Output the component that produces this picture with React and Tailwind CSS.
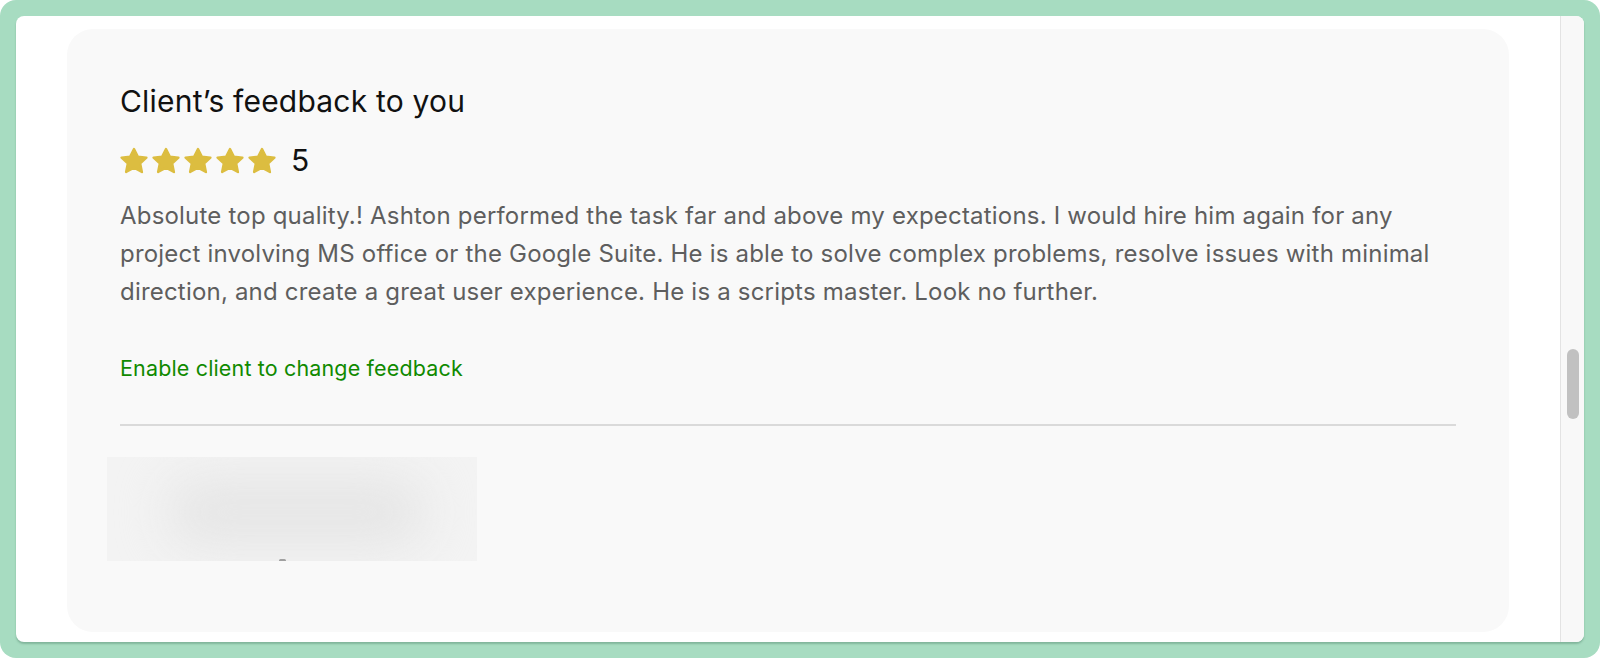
import React from 'react'

const Star = () => (
  <svg width="28" height="27" viewBox="0 0 28 27" className="shrink-0">
    <polygon
      points="14,2 17.8,9.6 26.4,10.6 20.2,16.5 21.9,25 14,20.8 6.1,25 7.8,16.5 1.6,10.6 10.2,9.6"
      fill="#dcbd40"
      stroke="#dcbd40"
      strokeWidth="2.4"
      strokeLinejoin="round"
    />
  </svg>
)

const FeedbackCard = () => {
  const text =
    'Absolute top quality.! Ashton performed the task far and above my expectations. I would hire him again for any project involving MS office or the Google Suite. He is able to solve complex problems, resolve issues with minimal direction, and create a great user experience. He is a scripts master. Look no further.'

  return (
    <div className="mx-[51px] mt-[13px] h-[603px] rounded-[26px] bg-[#f9f9f9] px-[53px] pt-[54px]">
      <h2 className="text-[30px] leading-[36px] tracking-[0.2px] text-[#111111]">Client’s feedback to you</h2>

      <div className="mt-[27px] flex h-[28px] items-center">
        <div className="flex gap-[4px]">
          {[0, 1, 2, 3, 4].map((i) => (
            <Star key={i} />
          ))}
        </div>
        <span className="ml-[15px] text-[30px] leading-none text-[#111111]">5</span>
      </div>

      <p className="mt-[23px] text-[24px] leading-[38px] tracking-[0.2px] text-[#5e5e5e]">{text}</p>

      <a className="mt-[42px] block text-[21.5px] leading-[30px] tracking-[0.15px] text-[#108a00]">Enable client to change feedback</a>

      <div className="mt-[41px] h-[2px] bg-[#dadada]" />

      {/* blurred out client info */}
      <div className="relative -ml-[13px] mt-[31px] h-[104px] w-[370px] overflow-hidden bg-[#f3f3f3]">
        <div className="absolute left-[60px] top-[20px] h-[70px] w-[260px] rounded-full bg-[#e6e6e6] blur-xl" />
        <div className="absolute left-[172px] top-[102px] h-[3px] w-[7px] rounded-full bg-[#a0a0a0]" />
      </div>
    </div>
  )
}

export default function App() {
  return (
    <div className="h-[658px] w-[1600px] overflow-hidden bg-white" style={{ fontFamily: 'Inter, "Liberation Sans", sans-serif' }}>
      <div className="flex h-full w-full rounded-[16px] bg-[#a7dcc1] p-[16px]">
        <div className="flex flex-1 overflow-hidden rounded-[8px] bg-white shadow-[0_2px_2px_rgba(60,110,85,0.35)]">
          <div className="flex-1">
            <FeedbackCard />
          </div>
          <div className="flex w-[24px] border-l border-[#e3e3e3] bg-[#f8f8f8] pl-[6px] pt-[333px]">
            <div className="h-[70px] w-[12px] rounded-full bg-[#c1c1c1]" />
          </div>
        </div>
      </div>
    </div>
  )
}
